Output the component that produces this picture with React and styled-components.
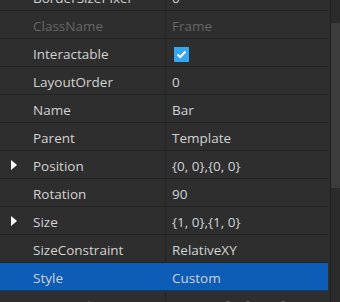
import React from "react";
import styled, { createGlobalStyle } from "styled-components";

const Global = createGlobalStyle`
  html, body {
    margin: 0;
    padding: 0;
    background: #2e2e2e;
    overflow: hidden;
  }
`;

const Panel = styled.div`
  display: flex;
  width: 340px;
  height: 302px;
  overflow: hidden;
  background: #2e2e2e;
  font-family: "Open Sans", "Noto Sans", sans-serif;
  font-size: 13.5px;
  color: #d2d2d2;
`;

const List = styled.div`
  flex: 1;
  overflow: hidden;
  padding-right: 2px;
`;

const Rows = styled.div`
  margin-top: -17px;
`;

const Row = styled.div`
  display: grid;
  grid-template-columns: 166px 1fr;
  height: 28px;
  box-sizing: border-box;
  border-bottom: 1px solid ${(p) => (p.selected ? "#0a3c7c" : "#222222")};
  background: ${(p) => (p.selected ? "#0d5cb6" : "transparent")};
  color: ${(p) => (p.disabled ? "#666666" : "#d2d2d2")};
`;

const NameCell = styled.div`
  display: flex;
  align-items: center;
  padding-left: 11px;
  padding-top: 2px;
  border-right: 1px solid ${(p) => (p.selected ? "#0d5cb6" : "#232323")};
  white-space: nowrap;
  overflow: hidden;
`;

const Expander = styled.span`
  width: 22px;
  flex: none;
  display: flex;
  align-items: center;
  margin-top: -1px;
`;

const Triangle = styled.span`
  width: 0;
  height: 0;
  border-top: 5px solid transparent;
  border-bottom: 5px solid transparent;
  border-left: 6px solid #ffffff;
`;

const ValueCell = styled.div`
  display: flex;
  align-items: center;
  padding-left: 6px;
  padding-top: 2px;
  white-space: nowrap;
  overflow: hidden;
`;

const Check = styled.span`
  width: 15px;
  height: 15px;
  margin-left: 2px;
  margin-top: 2px;
  background: #35a6f2;
  display: flex;
  align-items: center;
  justify-content: center;
`;

const Scrollbar = styled.div`
  width: 9px;
  border-left: 1px solid #1f1f1f;
  background: #2b2b2b;
  display: flex;
  flex-direction: column;
`;

const Thumb = styled.div`
  margin-top: 23px;
  height: 165px;
  background: #3c3c3c;
`;

const props = [
  { name: "BorderSizePixel", value: "0" },
  { name: "ClassName", value: "Frame", disabled: true },
  { name: "Interactable", check: true },
  { name: "LayoutOrder", value: "0" },
  { name: "Name", value: "Bar" },
  { name: "Parent", value: "Template" },
  { name: "Position", value: "{0, 0},{0, 0}", expand: true },
  { name: "Rotation", value: "90" },
  { name: "Size", value: "{1, 0},{1, 0}", expand: true },
  { name: "SizeConstraint", value: "RelativeXY" },
  { name: "Style", value: "Custom", selected: true },
  { name: "UniqueId", value: "429_569f59f4333f099", disabled: true },
];

export default function App() {
  return (
    <>
      <Global />
      <Panel>
        <List>
          <Rows>
            {props.map((p) => (
              <Row key={p.name} selected={p.selected} disabled={p.disabled}>
                <NameCell selected={p.selected}>
                  <Expander>{p.expand && <Triangle />}</Expander>
                  {p.name}
                </NameCell>
                <ValueCell>
                  {p.check ? (
                    <Check>
                      <svg width="11" height="9" viewBox="0 0 11 9">
                        <path
                          d="M1.5 4.5 L4.2 7 L9.5 1.5"
                          fill="none"
                          stroke="#ffffff"
                          strokeWidth="2"
                        />
                      </svg>
                    </Check>
                  ) : (
                    p.value
                  )}
                </ValueCell>
              </Row>
            ))}
          </Rows>
        </List>
        <Scrollbar>
          <Thumb />
        </Scrollbar>
      </Panel>
    </>
  );
}
